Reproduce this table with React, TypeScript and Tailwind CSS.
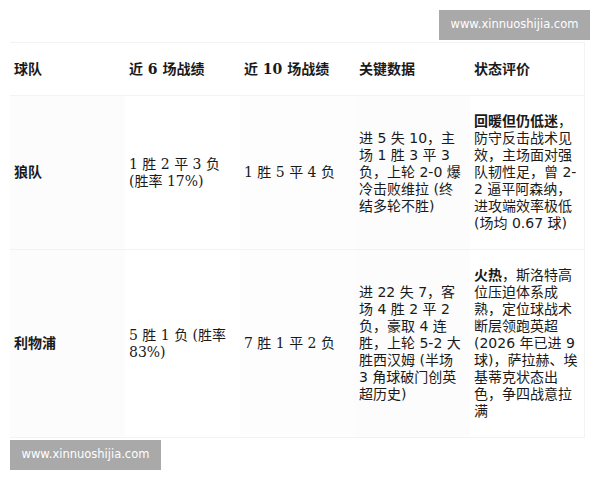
import React from "react";

const serif = "font-['DejaVu_Serif','Noto_Sans_CJK_SC',serif]";
const sans = "font-['DejaVu_Sans','Noto_Sans_CJK_SC',sans-serif]";

type Row = {
  team: string;
  last6: string;
  last10: string;
  key: string;
  statusBold: string;
  statusRest: string;
};

const rows: Row[] = [
  {
    team: "狼队",
    last6: "1 胜 2 平 3 负 (胜率 17%)",
    last10: "1 胜 5 平 4 负",
    key: "进 5 失 10，主场 1 胜 3 平 3 负，上轮 2-0 爆冷击败维拉 (终结多轮不胜)",
    statusBold: "回暖但仍低迷",
    statusRest: "，防守反击战术见效，主场面对强队韧性足，曾 2-2 逼平阿森纳，进攻端效率极低 (场均 0.67 球)",
  },
  {
    team: "利物浦",
    last6: "5 胜 1 负 (胜率 83%)",
    last10: "7 胜 1 平 2 负",
    key: "进 22 失 7，客场 4 胜 2 平 2 负，豪取 4 连胜，上轮 5-2 大胜西汉姆 (半场 3 角球破门创英超历史)",
    statusBold: "火热",
    statusRest: "，斯洛特高位压迫体系成熟，定位球战术断层领跑英超 (2026 年已进 9 球)，萨拉赫、埃基蒂克状态出色，争四战意拉满",
  },
];

function Watermark({ className }: { className: string }) {
  return (
    <div
      className={`absolute flex h-[30px] w-[151px] items-center justify-center bg-[#a9a9a9] text-[11.5px] text-white ${sans} ${className}`}
    >
      www.xinnuoshijia.com
    </div>
  );
}

export default function App() {
  const cell = "flex items-center pl-[4px] pr-[7px] text-[14px] leading-[17px] text-[#1a1a1a]";
  return (
    <div className="relative h-[480px] w-[600px] overflow-hidden bg-white">
      <div className="pl-[10px] pt-[42px]">
        <div className="grid w-[575px] grid-cols-[repeat(5,115px)] border-r border-t border-[#f3f3f3]">
          {/* header */}
          <div className={`${cell} ${serif} h-[53px] border-b border-[#f3f3f3] font-bold`}>球队</div>
          <div className={`${cell} ${serif} h-[53px] border-b border-[#f3f3f3] font-bold`}>近 6 场战绩</div>
          <div className={`${cell} ${serif} h-[53px] border-b border-[#f3f3f3] font-bold`}>近 10 场战绩</div>
          <div className={`${cell} ${serif} h-[53px] border-b border-[#f3f3f3] font-bold`}>关键数据</div>
          <div className={`${cell} ${serif} h-[53px] border-b border-[#f3f3f3] font-bold`}>状态评价</div>

          {rows.map((r) => (
            <React.Fragment key={r.team}>
              <div className={`${cell} ${sans} border-b border-[#f3f3f3] bg-[#fcfcfc] font-bold`}>{r.team}</div>
              <div className={`${cell} ${serif} border-b border-[#f3f3f3]`}>{r.last6}</div>
              <div className={`${cell} ${serif} border-b border-[#f3f3f3] bg-[#fdfdfd]`}>{r.last10}</div>
              <div className={`${cell} ${sans} border-b border-[#f3f3f3] bg-[#fcfcfc]`}>{r.key}</div>
              <div className={`${cell} ${sans} border-b border-[#f3f3f3] py-[17px]`}>
                <p>
                  <span className="font-bold">{r.statusBold}</span>
                  {r.statusRest}
                </p>
              </div>
            </React.Fragment>
          ))}
        </div>
      </div>
      <Watermark className="left-[439px] top-[10px]" />
      <Watermark className="left-[10px] top-[440px]" />
    </div>
  );
}
